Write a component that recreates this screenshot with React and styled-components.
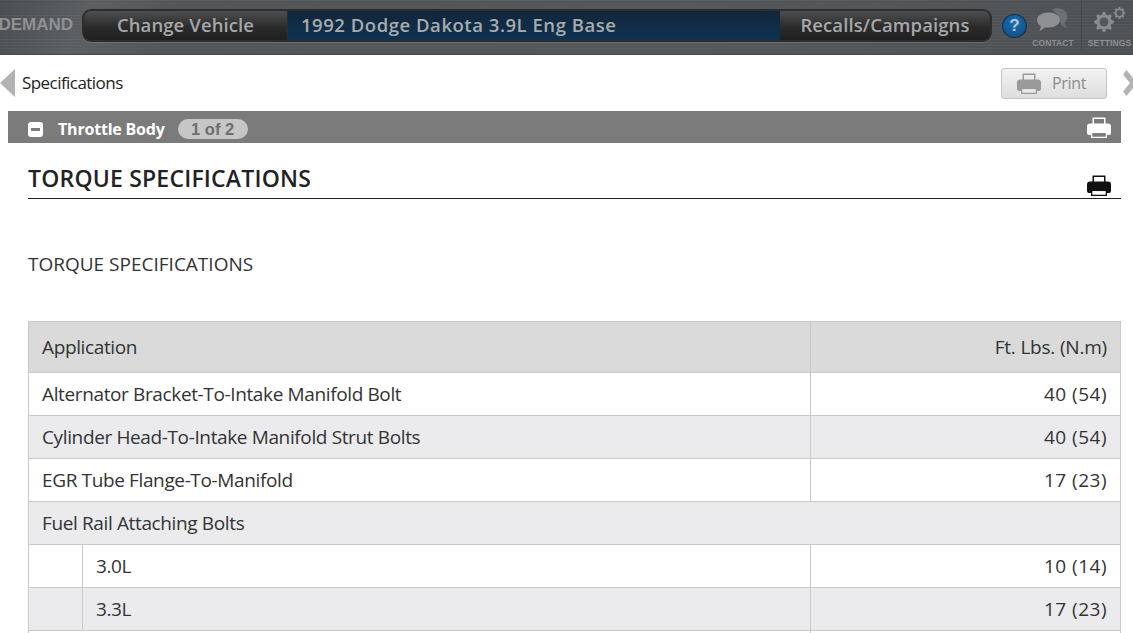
import React from "react";
import styled, {createGlobalStyle} from "styled-components";

const GlobalStyle = createGlobalStyle`
  html, body {
    margin: 0;
    padding: 0;
    height: 633px;
    overflow: hidden;
    background: #fff;
    font-family: "Open Sans", "Liberation Sans", sans-serif;
  }
`

const Page = styled.div`
  width: 1133px;
  height: 633px;
  overflow: hidden;
`

const TopBar = styled.div`
  height: 55px;
  box-sizing: border-box;
  display: flex;
  align-items: flex-start;
  overflow: hidden;
  background:
    repeating-linear-gradient(rgba(255, 255, 255, 0.025) 0 1px, rgba(0, 0, 0, 0.025) 1px 3px),
    linear-gradient(115deg, #4c4f52 0%, #5d6063 8%, #54575a 16%, #56595c 60%, #505356 100%);
  border-bottom: 1px solid #47494b;
`

const Brand = styled.div`
  width: 82px;
  flex: none;
  padding: 15px 9px 0 0;
  box-sizing: border-box;
  display: flex;
  justify-content: flex-end;
  font-family: "Liberation Sans", sans-serif;
  font-weight: 700;
  font-size: 17px;
  line-height: 20px;
  color: #8f9193;
  white-space: nowrap;
  overflow: hidden;
`

const Capsule = styled.div`
  width: 910px;
  height: 33px;
  margin-top: 9px;
  flex: none;
  box-sizing: border-box;
  display: flex;
  padding: 2px;
  border-radius: 9px;
  background: #2c2d2e;
  box-shadow: 0 1px 1px rgba(255, 255, 255, 0.12);
`

const CapsuleButton = styled.div`
  width: ${p => p.$width}px;
  flex: none;
  display: flex;
  align-items: center;
  justify-content: center;
  padding-bottom: 3px;
  box-sizing: border-box;
  font-size: 18.5px;
  font-weight: 600;
  color: #a6a8a9;
  letter-spacing: 0.1px;
  background: linear-gradient(#4e4f50, #2b2b2c 55%, #1f1f20);
  border-radius: ${p => p.$left ? "7px 0 0 7px" : "0 7px 7px 0"};
`

const VehicleTitle = styled.div`
  flex: 1;
  display: flex;
  align-items: center;
  padding: 0 0 3px 13px;
  margin-left: 1px;
  font-size: 18.5px;
  font-weight: 600;
  color: #a9abad;
  letter-spacing: 0.53px;
  background: linear-gradient(#12263a, #0e3252);
`

const HelpBadge = styled.div`
  width: 25px;
  height: 24px;
  margin: 14px 0 0 10px;
  flex: none;
  display: flex;
  align-items: center;
  justify-content: center;
  border-radius: 50%;
  border: 1px solid #163047;
  box-sizing: border-box;
  background: radial-gradient(circle at 50% 35%, #1a6fb0, #0d4a80);
  color: #b9c6d2;
  font-family: "Liberation Sans", sans-serif;
  font-weight: 700;
  font-size: 17px;
`

const ToolLink = styled.div`
  flex: none;
  width: ${p => p.$width}px;
  height: 50px;
  padding: ${p => p.$top}px ${p => p.$right || 0}px 0 ${p => p.$left || 0}px;
  display: flex;
  flex-direction: column;
  align-items: center;
  border-left: ${p => p.$divider ? "1px solid #474a4c" : "none"};
  box-sizing: border-box;
`

const ToolLabel = styled.div`
  margin-top: auto;
  padding-bottom: 2px;
  font-family: "Liberation Sans", sans-serif;
  font-size: 8.5px;
  font-weight: 700;
  line-height: 10px;
  letter-spacing: 0.1px;
  color: #8e9092;
  white-space: nowrap;
`

const CrumbRow = styled.div`
  height: 56px;
  display: flex;
  align-items: center;
`

const BackArrow = styled.div`
  width: 0;
  height: 0;
  border-style: solid;
  border-width: 14px 15px 14px 0;
  border-color: transparent #b3b3b3 transparent transparent;
  margin-right: 7px;
  flex: none;
`

const CrumbText = styled.div`
  font-size: 17px;
  color: #222;
  letter-spacing: -0.55px;
  padding-bottom: 2px;
  flex: 1;
`

const PrintButton = styled.div`
  width: 106px;
  height: 31px;
  margin-right: 16px;
  flex: none;
  box-sizing: border-box;
  display: flex;
  align-items: center;
  padding-left: 15px;
  gap: 11px;
  border: 1px solid #c4c4c4;
  border-radius: 3px;
  background: linear-gradient(#f2f2f2, #dedede);
  font-size: 16px;
  letter-spacing: -0.3px;
  color: #8c8c8c;
`

const NextChevron = styled.svg`
  width: 10px;
  height: 26px;
  flex: none;
`

const SectionBar = styled.div`
  height: 32px;
  margin: 0 12px 0 8px;
  padding: 4px 10px 0 20px;
  box-sizing: border-box;
  display: flex;
  align-items: center;
  background: #7b7b7b;
`

const MinusBox = styled.div`
  width: 15px;
  height: 15px;
  flex: none;
  display: flex;
  align-items: center;
  justify-content: center;
  background: #fff;
  border-radius: 3px;
  margin-right: 15px;

  &::before {
    content: "";
    width: 9px;
    height: 3px;
    background: #7b7b7b;
  }
`

const SectionTitle = styled.div`
  font-size: 16px;
  font-weight: 700;
  letter-spacing: -0.2px;
  color: #fff;
  margin-right: 13px;
`

const CountPill = styled.div`
  width: 70px;
  height: 20px;
  display: flex;
  align-items: center;
  justify-content: center;
  border-radius: 10px;
  background: #c6c6c6;
  color: #6e6e6e;
  font-family: "Liberation Sans", sans-serif;
  font-size: 16.5px;
  font-weight: 700;
  margin-right: auto;
`

const BarPrinter = styled.div`
  display: flex;
  margin-top: -4px;
`

const Content = styled.div`
  margin: 0 12px 0 28px;
`

const ArticleHead = styled.div`
  height: 56px;
  box-sizing: border-box;
  display: flex;
  align-items: center;
  justify-content: space-between;
  padding: 14px 10px 0 0;
  border-bottom: 1px solid #222;
`

const ArticleTitle = styled.h1`
  margin: 0;
  font-size: 23px;
  font-weight: 600;
  letter-spacing: 0.2px;
  color: #222;
`

const HeadPrinter = styled.div`
  display: flex;
  margin-top: 15px;
`

const SubHeading = styled.div`
  margin: 53px 0 45px;
  height: 24px;
  line-height: 24px;
  font-size: 19px;
  color: #333;
`

const SpecTable = styled.table`
  width: 1093px;
  border-collapse: collapse;
  table-layout: fixed;
  font-size: 19px;
  color: #333;
`

const Row = styled.tr`
  background: ${p => p.$head ? "#dadada" : p.$shade ? "#ebebed" : "#fff"};
  height: ${p => p.$head ? 51 : 43}px;
`

const Cell = styled.td`
  border: 1px solid #c9c9c9;
  padding: 0 13px;
  text-align: ${p => p.$right ? "right" : "left"};
  letter-spacing: ${p => p.$right ? (p.$head ? "-0.2px" : "0.5px") : "-0.37px"};
  white-space: nowrap;
`

function PrinterIcon({color, hole}) {
    return (
        <svg width="24" height="21" viewBox="0 0 24 21">
            <path d="M5.500 8V.5h13V8h-1.500V2H7v6z" fill={color}/>
            <path d="M3 6.500h18a3 3 0 0 1 3 3V16a2 2 0 0 1-2 2h-2v-3H4v3H2a2 2 0 0 1-2-2V9.500a3 3 0 0 1 3-3z" fill={color}/>
            <path d="M4 15h16v6H4zM5.500 16.200v3.300h13v-3.300z" fill={color} fillRule="evenodd"/>
            <rect x="5.500" y="16.200" width="13" height="3.300" fill={hole}/>
        </svg>
    )
}

function ContactIcon() {
    return (
        <svg width="32" height="24" viewBox="0 0 32 24">
            <path d="M15 2c2-2 7-2.500 11-.5 5 2.500 6 9 1.500 13l2 6-5.500-4C24 10 20 5 15 2z" fill="#6d7072"/>
            <path d="M11.500 4.500c6.500 0 11.500 3.300 11.500 7.500s-5 7.500-11.500 7.500c-1 0-2 0-3-.2L2.500 23l1.500-5C1.500 16.500 0 14.500 0 12c0-4.200 5-7.500 11.500-7.500z" fill="#8e9092"/>
        </svg>
    )
}

const gearPath = (cx, cy, r, teeth) => {
    let d = "";
    for (let i = 0; i < teeth * 4; i++) {
        const a = (i / (teeth * 4)) * Math.PI * 2 - Math.PI / (teeth * 4);
        const rad = i % 4 < 2 ? r : r * 0.76;
        d += `${i === 0 ? "M" : "L"}${(cx + rad * Math.cos(a)).toFixed(2)} ${(cy + rad * Math.sin(a)).toFixed(2)}`;
    }
    return d + "Z";
}

function SettingsIcon() {
    return (
        <svg width="32" height="25" viewBox="0 0 32 25">
            <path d={gearPath(10, 15, 10, 8)} fill="#8a8c8e"/>
            <circle cx="10" cy="15" r="4.500" fill="#55585b"/>
            <path d={gearPath(25.500, 6, 6, 8)} fill="#8a8c8e"/>
            <circle cx="25.500" cy="6" r="3" fill="#55585b"/>
        </svg>
    )
}

const rows = [
    {name: "Alternator Bracket-To-Intake Manifold Bolt", value: "40 (54)"},
    {name: "Cylinder Head-To-Intake Manifold Strut Bolts", value: "40 (54)"},
    {name: "EGR Tube Flange-To-Manifold", value: "17 (23)"},
    {name: "Fuel Rail Attaching Bolts", group: true},
    {name: "3.0L", value: "10 (14)", sub: true},
    {name: "3.3L", value: "17 (23)", sub: true},
    {name: "", value: ""},
];

export default function App() {
    return (
        <Page>
            <GlobalStyle/>
            <TopBar>
                <Brand>DEMAND</Brand>
                <Capsule>
                    <CapsuleButton $width={203} $left>Change Vehicle</CapsuleButton>
                    <VehicleTitle>1992 Dodge Dakota 3.9L Eng Base</VehicleTitle>
                    <CapsuleButton $width={210}>Recalls/Campaigns</CapsuleButton>
                </Capsule>
                <HelpBadge>?</HelpBadge>
                <ToolLink $width={54} $top={8} $right={2}>
                    <ContactIcon/>
                    <ToolLabel>CONTACT</ToolLabel>
                </ToolLink>
                <ToolLink $width={52} $top={7} $left={4} $divider>
                    <SettingsIcon/>
                    <ToolLabel>SETTINGS</ToolLabel>
                </ToolLink>
            </TopBar>
            <CrumbRow>
                <BackArrow/>
                <CrumbText>Specifications</CrumbText>
                <PrintButton>
                    <PrinterIcon color="#9a9a9a" hole="#e8e8e8"/>
                    Print
                </PrintButton>
                <NextChevron viewBox="0 0 10 26">
                    <path d="M0 4.500L3.500 0 14 13 3.500 26 0 21.500 7 13z" fill="#b3b3b3"/>
                </NextChevron>
            </CrumbRow>
            <SectionBar>
                <MinusBox/>
                <SectionTitle>Throttle Body</SectionTitle>
                <CountPill>1 of 2</CountPill>
                <BarPrinter><PrinterIcon color="#fff" hole="#7b7b7b"/></BarPrinter>
            </SectionBar>
            <Content>
                <ArticleHead>
                    <ArticleTitle>TORQUE SPECIFICATIONS</ArticleTitle>
                    <HeadPrinter><PrinterIcon color="#111" hole="#fff"/></HeadPrinter>
                </ArticleHead>
                <SubHeading>TORQUE SPECIFICATIONS</SubHeading>
                <SpecTable>
                    <colgroup>
                        <col style={{width: 54}}/>
                        <col style={{width: 728}}/>
                        <col/>
                    </colgroup>
                    <tbody>
                        <Row $head>
                            <Cell colSpan={2}>Application</Cell>
                            <Cell $right $head>Ft. Lbs. (N.m)</Cell>
                        </Row>
                        {rows.map((row, i) => {
                            const shade = i % 2 === 1;
                            if (row.group) {
                                return <Row key={i} $shade={shade}><Cell colSpan={3}>{row.name}</Cell></Row>
                            }
                            return (
                                <Row key={i} $shade={shade}>
                                    {row.sub && <Cell/>}
                                    <Cell colSpan={row.sub ? 1 : 2}>{row.name}</Cell>
                                    <Cell $right>{row.value}</Cell>
                                </Row>
                            )
                        })}
                    </tbody>
                </SpecTable>
            </Content>
        </Page>
    )
}
